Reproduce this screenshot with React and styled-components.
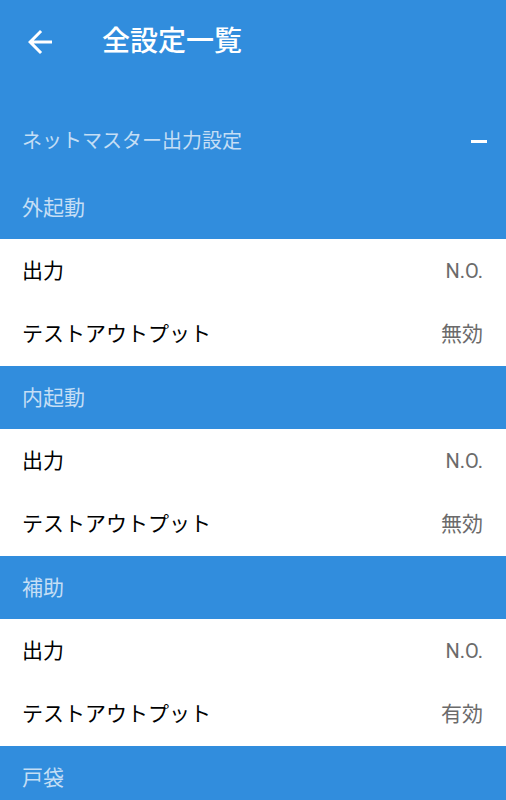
import React from 'react'
import styled, { createGlobalStyle } from 'styled-components'

const GlobalStyle = createGlobalStyle`
    html, body {
        margin: 0;
        padding: 0;
        background: #ffffff;
    }
    body {
        font-family: Roboto, "Noto Sans CJK JP", "Noto Sans", sans-serif;
        overflow: hidden;
    }
`

const BLUE = '#318ddd'

const Screen = styled.div`
    width: 506px;
    height: 800px;
    overflow: hidden;
    display: flex;
    flex-direction: column;
    background: #ffffff;
`

const Toolbar = styled.header`
    height: 84px;
    flex-shrink: 0;
    display: flex;
    align-items: center;
    padding-left: 21px;
    background: ${BLUE};
`

const BackButton = styled.button`
    width: 37px;
    height: 37px;
    padding: 0;
    border: none;
    background: transparent;
    display: flex;
    align-items: center;
    justify-content: center;
    color: #ffffff;
    cursor: pointer;
`

const Title = styled.h1`
    margin: 0 0 0 44px;
    font-size: 28px;
    font-weight: 500;
    color: #ffffff;
    line-height: 1;
`

const SectionHeader = styled.div`
    height: 92px;
    flex-shrink: 0;
    box-sizing: border-box;
    padding: 38px 19px 0 22px;
    display: flex;
    justify-content: space-between;
    align-items: flex-start;
    background: ${BLUE};
`

const SectionTitle = styled.span`
    font-size: 20px;
    line-height: 38px;
    color: rgba(255, 255, 255, 0.72);
`

const Collapse = styled.span`
    width: 16px;
    height: 3px;
    margin-top: 18px;
    background: #ffffff;
`

const GroupHeader = styled.div`
    height: 63.33px;
    flex-shrink: 0;
    box-sizing: border-box;
    display: flex;
    align-items: center;
    padding: 0 22px 4px;
    background: ${BLUE};
    font-size: 21px;
    color: rgba(255, 255, 255, 0.72);
`

const Row = styled.div`
    height: 63.33px;
    flex-shrink: 0;
    box-sizing: border-box;
    display: flex;
    align-items: center;
    justify-content: space-between;
    padding: 0 23px 0 22px;
    background: #ffffff;
`

const Label = styled.span`
    display: block;
    font-size: 21px;
    line-height: 30px;
    color: #000000;
`

const Value = styled.span`
    display: block;
    font-size: ${p => (p.$latin ? '20px' : '21px')};
    line-height: 30px;
    color: #6b6b6b;
`

const groups = [
    { name: '外起動', rows: [['出力', 'N.O.'], ['テストアウトプット', '無効']] },
    { name: '内起動', rows: [['出力', 'N.O.'], ['テストアウトプット', '無効']] },
    { name: '補助', rows: [['出力', 'N.O.'], ['テストアウトプット', '有効']] },
    { name: '戸袋', rows: [] },
]

const ArrowBack = () => (
    <svg width="36" height="36" viewBox="0 0 24 24" fill="currentColor">
        <path d="M20 11H7.83l5.59-5.59L12 4l-8 8 8 8 1.41-1.41L7.83 13H20v-2z" />
    </svg>
)

export default function App() {
    return (
        <Screen>
            <GlobalStyle />
            <Toolbar>
                <BackButton aria-label="戻る">
                    <ArrowBack />
                </BackButton>
                <Title>全設定一覧</Title>
            </Toolbar>
            <SectionHeader>
                <SectionTitle>ネットマスター出力設定</SectionTitle>
                <Collapse />
            </SectionHeader>
            {groups.map(g => (
                <React.Fragment key={g.name}>
                    <GroupHeader>{g.name}</GroupHeader>
                    {g.rows.map(([label, value]) => (
                        <Row key={label}>
                            <Label>{label}</Label>
                            <Value $latin={/^[A-Z.]+$/.test(value)}>{value}</Value>
                        </Row>
                    ))}
                </React.Fragment>
            ))}
        </Screen>
    )
}
